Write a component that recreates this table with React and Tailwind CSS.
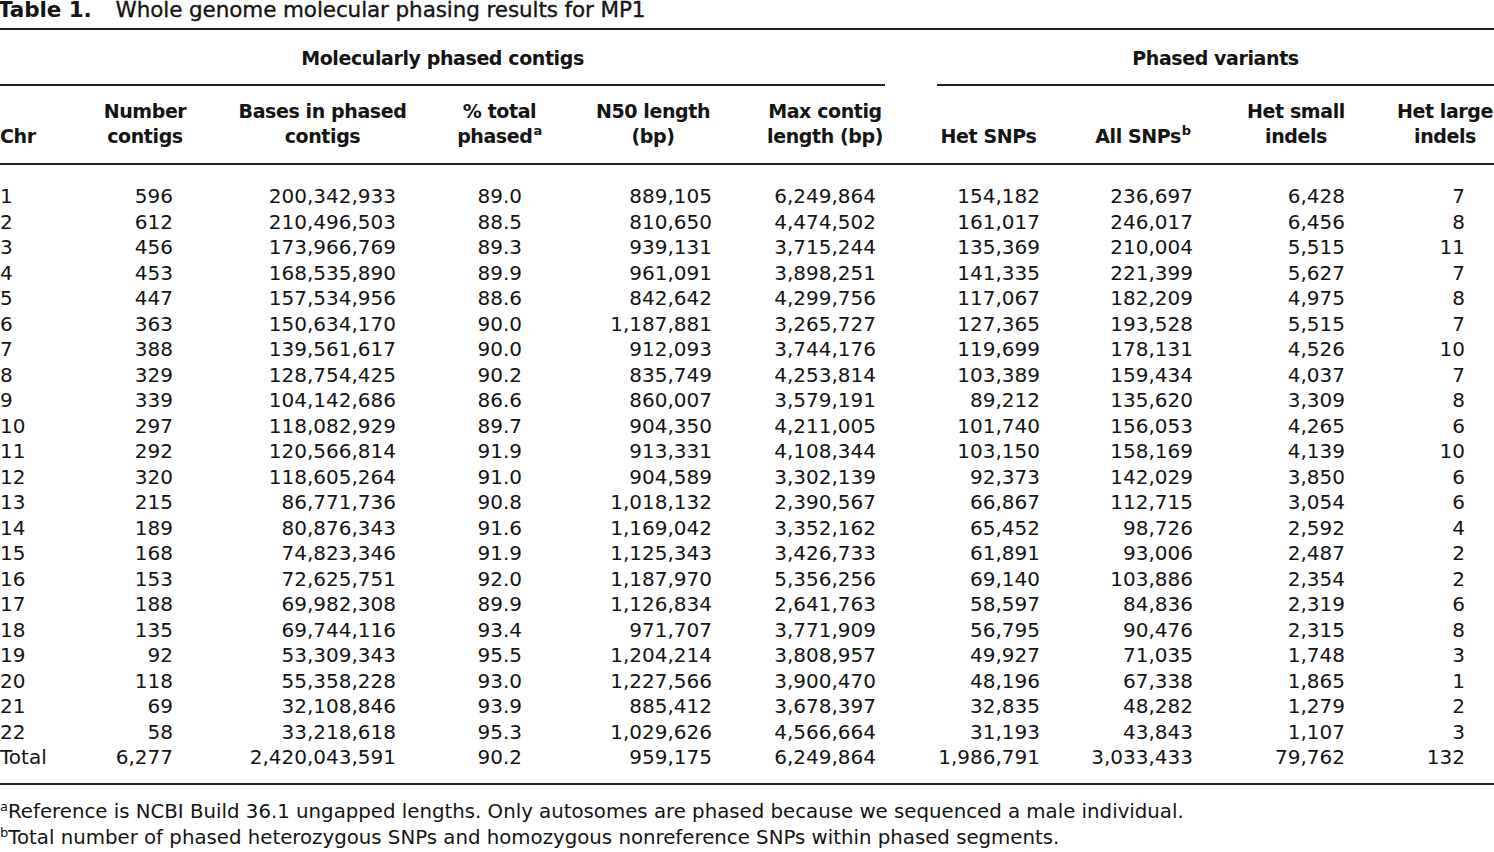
import React from "react";

const cols = [
  { w: 90, pr: 0, left: true },
  { w: 110, pr: 27 },
  { w: 245, pr: 49 },
  { w: 109, pr: 32 },
  { w: 198, pr: 40 },
  { w: 146, pr: 22 },
  { w: 181, pr: 39 },
  { w: 128, pr: 14 },
  { w: 178, pr: 40 },
  { w: 120, pr: 40 },
];

const rows = [
  ["1", "596", "200,342,933", "89.0", "889,105", "6,249,864", "154,182", "236,697", "6,428", "7"],
  ["2", "612", "210,496,503", "88.5", "810,650", "4,474,502", "161,017", "246,017", "6,456", "8"],
  ["3", "456", "173,966,769", "89.3", "939,131", "3,715,244", "135,369", "210,004", "5,515", "11"],
  ["4", "453", "168,535,890", "89.9", "961,091", "3,898,251", "141,335", "221,399", "5,627", "7"],
  ["5", "447", "157,534,956", "88.6", "842,642", "4,299,756", "117,067", "182,209", "4,975", "8"],
  ["6", "363", "150,634,170", "90.0", "1,187,881", "3,265,727", "127,365", "193,528", "5,515", "7"],
  ["7", "388", "139,561,617", "90.0", "912,093", "3,744,176", "119,699", "178,131", "4,526", "10"],
  ["8", "329", "128,754,425", "90.2", "835,749", "4,253,814", "103,389", "159,434", "4,037", "7"],
  ["9", "339", "104,142,686", "86.6", "860,007", "3,579,191", "89,212", "135,620", "3,309", "8"],
  ["10", "297", "118,082,929", "89.7", "904,350", "4,211,005", "101,740", "156,053", "4,265", "6"],
  ["11", "292", "120,566,814", "91.9", "913,331", "4,108,344", "103,150", "158,169", "4,139", "10"],
  ["12", "320", "118,605,264", "91.0", "904,589", "3,302,139", "92,373", "142,029", "3,850", "6"],
  ["13", "215", "86,771,736", "90.8", "1,018,132", "2,390,567", "66,867", "112,715", "3,054", "6"],
  ["14", "189", "80,876,343", "91.6", "1,169,042", "3,352,162", "65,452", "98,726", "2,592", "4"],
  ["15", "168", "74,823,346", "91.9", "1,125,343", "3,426,733", "61,891", "93,006", "2,487", "2"],
  ["16", "153", "72,625,751", "92.0", "1,187,970", "5,356,256", "69,140", "103,886", "2,354", "2"],
  ["17", "188", "69,982,308", "89.9", "1,126,834", "2,641,763", "58,597", "84,836", "2,319", "6"],
  ["18", "135", "69,744,116", "93.4", "971,707", "3,771,909", "56,795", "90,476", "2,315", "8"],
  ["19", "92", "53,309,343", "95.5", "1,204,214", "3,808,957", "49,927", "71,035", "1,748", "3"],
  ["20", "118", "55,358,228", "93.0", "1,227,566", "3,900,470", "48,196", "67,338", "1,865", "1"],
  ["21", "69", "32,108,846", "93.9", "885,412", "3,678,397", "32,835", "48,282", "1,279", "2"],
  ["22", "58", "33,218,618", "95.3", "1,029,626", "4,566,664", "31,193", "43,843", "1,107", "3"],
  ["Total", "6,277", "2,420,043,591", "90.2", "959,175", "6,249,864", "1,986,791", "3,033,433", "79,762", "132"],
];

const Sup = ({ children }) => (
  <span className="relative -top-[8px] text-[13px] leading-none ml-[1px]">{children}</span>
);

const headers = [
  ["", "Chr"],
  ["Number", "contigs"],
  ["Bases in phased", "contigs"],
  ["% total", <>phased<Sup>a</Sup></>],
  ["N50 length", "(bp)"],
  ["Max contig", "length (bp)"],
  ["", "Het SNPs"],
  ["", <>All SNPs<Sup>b</Sup></>],
  ["Het small", "indels"],
  ["Het large", "indels"],
];

const font = { fontFamily: '"DejaVu Sans", "Liberation Sans", sans-serif' };

export default function App() {
  return (
    <div className="w-[1494px] h-[852px] overflow-hidden bg-white text-[#141414]" style={font}>
      <div className="w-[1505px]">
        {/* Title */}
        <div className="h-[28px] flex items-start">
          <div className="leading-[20px] text-[21.5px] whitespace-nowrap -ml-[2px] tracking-[-0.1px]">
            <span className="font-bold">Table 1.</span>
            <span className="ml-[24px] [-webkit-text-stroke:0.35px_#141414]">Whole genome molecular phasing results for MP1</span>
          </div>
        </div>
        <div className="h-[2px] bg-[#222]" />
        {/* Group headers */}
        <div className="flex">
          <div className="w-[885px]">
            <div className="h-[54px] flex items-center justify-center text-[19px] font-bold tracking-[-0.4px] pt-[2px]">
              Molecularly phased contigs
            </div>
            <div className="h-[2px] bg-[#222]" />
          </div>
          <div className="w-[52px]" />
          <div className="w-[557px]">
            <div className="h-[54px] flex items-center justify-center text-[19px] font-bold tracking-[-0.4px] pt-[2px]">
              Phased variants
            </div>
            <div className="h-[2px] bg-[#222]" />
          </div>
        </div>
        {/* Column headers */}
        <div className="flex h-[77px] pt-[13px] text-[19px] font-bold tracking-[-0.4px] leading-[25px]">
          {headers.map((h, i) => (
            <div
              key={i}
              style={{ width: cols[i].w }}
              className={i === 0 ? "flex flex-col text-left" : "flex flex-col items-center text-center whitespace-nowrap"}
            >
              <div className="h-[25px]">{h[0]}</div>
              <div className="h-[25px]">{h[1]}</div>
            </div>
          ))}
        </div>
        <div className="h-[2px] bg-[#222]" />
        {/* Data */}
        <div className="pt-[19px] text-[20px] leading-[25.5px]">
          {rows.map((r, ri) => (
            <div key={ri} className="flex h-[25.5px]">
              {r.map((c, ci) => (
                <div
                  key={ci}
                  style={{ width: cols[ci].w, paddingRight: cols[ci].pr }}
                  className={cols[ci].left ? "text-left whitespace-nowrap" : "text-right whitespace-nowrap"}
                >
                  {c}
                </div>
              ))}
            </div>
          ))}
        </div>
        <div className="mt-[12px] h-[2px] bg-[#222]" />
        {/* Footnotes */}
        <div className="pt-[14px] text-[19.75px] leading-[26px]">
          <div className="whitespace-nowrap">
            <span className="relative -top-[7px] text-[13px] leading-none">a</span>Reference is NCBI Build 36.1 ungapped lengths. Only autosomes are phased because we sequenced a male individual.
          </div>
          <div className="whitespace-nowrap">
            <span className="relative -top-[7px] text-[13px] leading-none">b</span>Total number of phased heterozygous SNPs and homozygous nonreference SNPs within phased segments.
          </div>
        </div>
      </div>
    </div>
  );
}
